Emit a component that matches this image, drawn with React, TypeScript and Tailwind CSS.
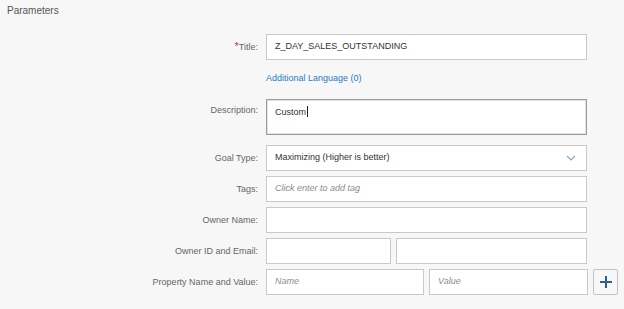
import React from 'react';

const font = { fontFamily: '"Liberation Sans", Arial, sans-serif' };

function Label({ children, required }: { children: React.ReactNode; required?: boolean }) {
  return (
    <div className="w-[259px] shrink-0 text-right text-[9px] leading-[12px] text-[#666666] pr-[1px]">
      {required && <span className="text-[#e52929] text-[11px] leading-[10px] align-top">*</span>}
      {children}
    </div>
  );
}

function Field({ className = '', children }: { className?: string; children?: React.ReactNode }) {
  return (
    <div
      className={`h-[26px] bg-white border border-[#c9c9c9] flex items-center pl-[8px] text-[9px] text-[#333333] ${className}`}
    >
      {children}
    </div>
  );
}

function Placeholder({ children }: { children: React.ReactNode }) {
  return <span className="italic text-[#8c8c8c]">{children}</span>;
}

export default function App() {
  return (
    <div className="w-[624px] h-[309px] bg-[#f7f7f7] overflow-hidden" style={font}>
      <div className="pt-[4px] pl-[7px] text-[10px] leading-[14px] text-[#555555]">Parameters</div>

      <div className="mt-[16px] flex flex-col">
        <div className="flex items-center">
          <Label required>Title:</Label>
          <Field className="ml-[7px] w-[321px]">Z_DAY_SALES_OUTSTANDING</Field>
        </div>

        <div className="h-[39px] flex">
          <div className="w-[259px] shrink-0" />
          <div className="ml-[7px] pt-[12px] text-[9px] leading-[12px] text-[#2b7bbf]">Additional Language (0)</div>
        </div>

        <div className="flex items-start">
          <div className="pt-[5px]">
            <Label>Description:</Label>
          </div>
          <div className="ml-[7px] w-[321px] h-[36px] bg-white border border-[#9c9c9c] shadow-[inset_0_0_0_1px_#e2e2e2] pl-[8px] pt-[6px] text-[9px] leading-[12px] text-[#333333] flex items-start">
            <span>Custom</span>
            <span className="inline-block w-[1px] h-[11px] bg-[#222222] ml-[1px]" />
          </div>
        </div>

        <div className="mt-[10px] flex flex-col gap-[5px]">
          <div className="flex items-center">
            <Label>Goal Type:</Label>
            <Field className="ml-[7px] w-[321px] justify-between pr-[10px]">
              <span>Maximizing (Higher is better)</span>
              <svg width="10" height="6" viewBox="0 0 10 6" fill="none">
                <path d="M1 1l4 4 4-4" stroke="#8aa6c4" strokeWidth="1.2" />
              </svg>
            </Field>
          </div>

          <div className="flex items-center">
            <Label>Tags:</Label>
            <Field className="ml-[7px] w-[321px]">
              <Placeholder>Click enter to add tag</Placeholder>
            </Field>
          </div>

          <div className="flex items-center">
            <Label>Owner Name:</Label>
            <Field className="ml-[7px] w-[321px]" />
          </div>

          <div className="flex items-center">
            <Label>Owner ID and Email:</Label>
            <div className="ml-[7px] flex gap-[5px]">
              <Field className="w-[125px]" />
              <Field className="w-[191px]" />
            </div>
          </div>

          <div className="flex items-center">
            <Label>Property Name and Value:</Label>
            <div className="ml-[7px] flex gap-[5px]">
              <Field className="w-[158px]">
                <Placeholder>Name</Placeholder>
              </Field>
              <Field className="w-[159px]">
                <Placeholder>Value</Placeholder>
              </Field>
              <button className="w-[25px] h-[26px] bg-[#f7f7f7] border border-[#c2c2c2] rounded-[2px] flex items-center justify-center">
                <svg width="12" height="12" viewBox="0 0 12 12">
                  <path d="M6 0v12M0 6h12" stroke="#2d5f8c" strokeWidth="2" />
                </svg>
              </button>
            </div>
          </div>
        </div>
      </div>
    </div>
  );
}
